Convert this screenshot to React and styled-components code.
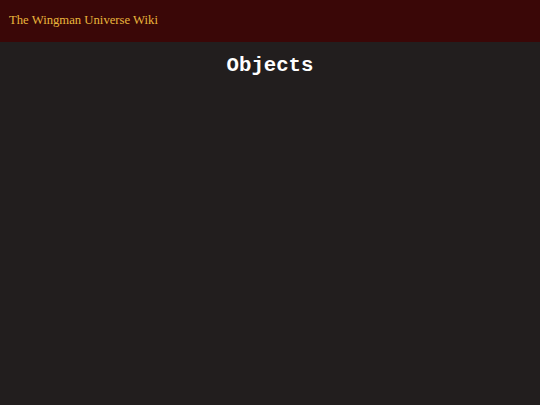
import React from 'react';
import styled, { createGlobalStyle } from 'styled-components';

const GlobalStyle = createGlobalStyle`
  html, body {
    margin: 0;
    padding: 0;
    height: 100%;
    background: #221e1e;
  }
  #root {
    min-height: 100%;
  }
`

const Page = styled.div`
  min-height: 405px;
  background: #221e1e;
`

const Header = styled.div`
  display: flex;
  align-items: center;
  height: 42px;
  padding: 0 9px 2px;
  box-sizing: border-box;
  background: #3a0707;
  font-family: "Liberation Serif", serif;
  font-size: 12.7px;
  color: #e9b53c;
`

const Title = styled.h1`
  margin: 0;
  padding-top: 12px;
  text-align: center;
  font-family: "Liberation Mono", monospace;
  font-weight: bold;
  font-size: 20.7px;
  color: #ffffff;
`

export default function App() {
  return (
    <Page>
      <GlobalStyle />
      <Header>The Wingman Universe Wiki</Header>
      <Title>Objects</Title>
    </Page>
  );
}
